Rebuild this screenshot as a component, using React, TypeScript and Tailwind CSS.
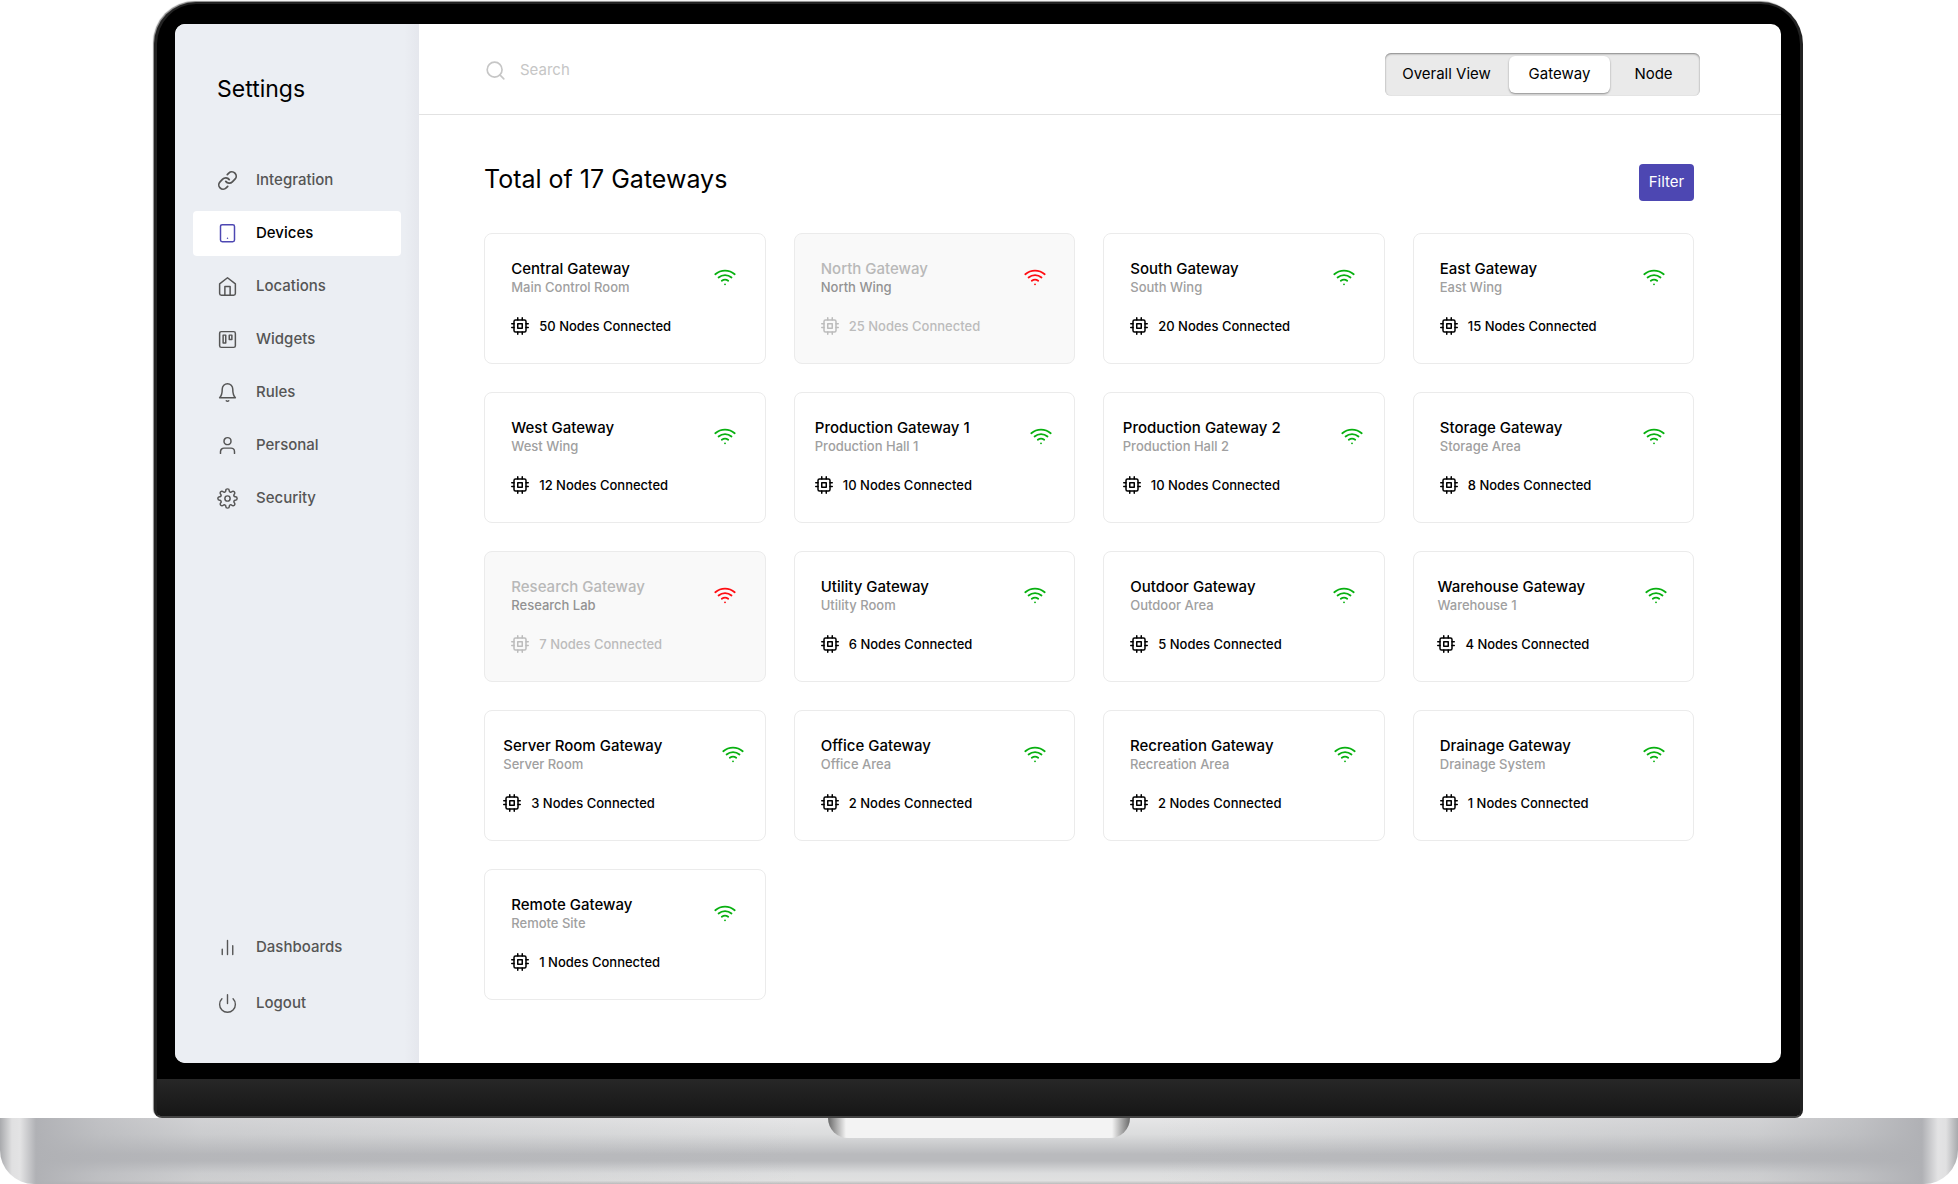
import React from "react";

type IconProps = { className?: string };

function Svg({ className, width = 2, children }: { className?: string; width?: number; children: React.ReactNode }) {
  return (
    <svg viewBox="0 0 24 24" fill="none" stroke="currentColor" strokeWidth={width} strokeLinecap="round" strokeLinejoin="round" aria-hidden="true" className={className}>
      {children}
    </svg>
  );
}

const LinkIcon = ({ className }: IconProps) => (
  <Svg className={className} width={2}>
    <path d="M10 13a5 5 0 0 0 7.54.54l3-3a5 5 0 0 0-7.07-7.07l-1.72 1.71" />
    <path d="M14 11a5 5 0 0 0-7.54-.54l-3 3a5 5 0 0 0 7.07 7.07l1.71-1.71" />
  </Svg>
);
const TabletIcon = ({ className }: IconProps) => (
  <Svg className={className} width={1.7}>
    <rect x="4" y="2" width="16" height="19.5" rx="2" />
    <path d="M12 17.5h.01" />
  </Svg>
);
const HomeIcon = ({ className }: IconProps) => (
  <Svg className={className} width={1.7}>
    <path d="m3 9 9-7 9 7v11a2 2 0 0 1-2 2H5a2 2 0 0 1-2-2z" />
    <path d="M9 22V12h6v10" />
  </Svg>
);
const BoardIcon = ({ className }: IconProps) => (
  <Svg className={className} width={1.7}>
    <rect x="3" y="3" width="18" height="18" rx="2" />
    <path d="M7 7h3v9H7zM14 7h3v5h-3z" />
  </Svg>
);
const BellIcon = ({ className }: IconProps) => (
  <Svg className={className} width={1.7}>
    <path d="M18 8A6 6 0 0 0 6 8c0 7-3 10-3 10h18s-3-3-3-10" />
    <path d="M13.4 21.5a1.9 1.9 0 0 1-2.8 0" />
  </Svg>
);
const UserIcon = ({ className }: IconProps) => (
  <Svg className={className} width={1.7}>
    <path d="M20 21v-2a4 4 0 0 0-4-4H8a4 4 0 0 0-4 4v2" />
    <circle cx="12" cy="7" r="4" />
  </Svg>
);
const GearIcon = ({ className }: IconProps) => (
  <Svg className={className} width={1.7}>
    <circle cx="12" cy="12" r="3" />
    <path d="M19.4 15a1.65 1.65 0 0 0 .33 1.82l.06.06a2 2 0 0 1 0 2.83 2 2 0 0 1-2.83 0l-.06-.06a1.65 1.65 0 0 0-1.82-.33 1.65 1.65 0 0 0-1 1.51V21a2 2 0 0 1-2 2 2 2 0 0 1-2-2v-.09A1.65 1.65 0 0 0 9 19.4a1.65 1.65 0 0 0-1.82.33l-.06.06a2 2 0 0 1-2.83 0 2 2 0 0 1 0-2.83l.06-.06a1.65 1.65 0 0 0 .33-1.82 1.65 1.65 0 0 0-1.51-1H3a2 2 0 0 1-2-2 2 2 0 0 1 2-2h.09A1.65 1.65 0 0 0 4.6 9a1.65 1.65 0 0 0-.33-1.82l-.06-.06a2 2 0 0 1 0-2.83 2 2 0 0 1 2.83 0l.06.06a1.65 1.65 0 0 0 1.82.33H9a1.65 1.65 0 0 0 1-1.51V3a2 2 0 0 1 2-2 2 2 0 0 1 2 2v.09a1.65 1.65 0 0 0 1 1.51 1.65 1.65 0 0 0 1.82-.33l.06-.06a2 2 0 0 1 2.83 0 2 2 0 0 1 0 2.83l-.06.06a1.65 1.65 0 0 0-.33 1.82V9a1.65 1.65 0 0 0 1.51 1H21a2 2 0 0 1 2 2 2 2 0 0 1-2 2h-.09a1.65 1.65 0 0 0-1.51 1z" />
  </Svg>
);
const BarsIcon = ({ className }: IconProps) => (
  <Svg className={className} width={1.6}>
    <path d="M18 20V10M12 20V4M6 20v-6" />
  </Svg>
);
const PowerIcon = ({ className }: IconProps) => (
  <Svg className={className} width={1.6}>
    <path d="M18.36 6.64a9 9 0 1 1-12.73 0M12 2v10" />
  </Svg>
);
const SearchIcon = ({ className }: IconProps) => (
  <Svg className={className} width={1.9}>
    <circle cx="11" cy="11" r="8.5" />
    <path d="m21.5 21.5-4.5-4.5" />
  </Svg>
);
const WifiIcon = ({ className }: IconProps) => (
  <Svg className={className}>
    <path d="M5 12.55a11 11 0 0 1 14.08 0" />
    <path d="M1.42 9a16 16 0 0 1 21.16 0" />
    <path d="M8.53 16.11a6 6 0 0 1 6.95 0" />
    <path d="M12 20h.01" />
  </Svg>
);
const CpuIcon = ({ className }: IconProps) => (
  <Svg className={className}>
    <rect x="4" y="4" width="16" height="16" rx="2" />
    <rect x="9" y="9" width="6" height="6" />
    <path d="M9 1v3M15 1v3M9 20v3M15 20v3M20 9h3M20 14h3M1 9h3M1 14h3" />
  </Svg>
);

const mainNav = [
  { label: "Integration", Icon: LinkIcon },
  { label: "Devices", Icon: TabletIcon, active: true },
  { label: "Locations", Icon: HomeIcon },
  { label: "Widgets", Icon: BoardIcon },
  { label: "Rules", Icon: BellIcon },
  { label: "Personal", Icon: UserIcon },
  { label: "Security", Icon: GearIcon },
];
const footerNav = [
  { label: "Dashboards", Icon: BarsIcon },
  { label: "Logout", Icon: PowerIcon },
];

const gateways = [
  { name: "Central Gateway", place: "Main Control Room", nodes: 50 },
  { name: "North Gateway", place: "North Wing", nodes: 25, offline: true },
  { name: "South Gateway", place: "South Wing", nodes: 20 },
  { name: "East Gateway", place: "East Wing", nodes: 15 },
  { name: "West Gateway", place: "West Wing", nodes: 12 },
  { name: "Production Gateway 1", place: "Production Hall 1", nodes: 10 },
  { name: "Production Gateway 2", place: "Production Hall 2", nodes: 10 },
  { name: "Storage Gateway", place: "Storage Area", nodes: 8 },
  { name: "Research Gateway", place: "Research Lab", nodes: 7, offline: true },
  { name: "Utility Gateway", place: "Utility Room", nodes: 6 },
  { name: "Outdoor Gateway", place: "Outdoor Area", nodes: 5 },
  { name: "Warehouse Gateway", place: "Warehouse 1", nodes: 4 },
  { name: "Server Room Gateway", place: "Server Room", nodes: 3 },
  { name: "Office Gateway", place: "Office Area", nodes: 2 },
  { name: "Recreation Gateway", place: "Recreation Area", nodes: 2 },
  { name: "Drainage Gateway", place: "Drainage System", nodes: 1 },
  { name: "Remote Gateway", place: "Remote Site", nodes: 1 },
];

type NavItem = { label: string; Icon: React.ComponentType<IconProps>; active?: boolean };

function NavLink({ label, Icon, active }: NavItem) {
  return (
    <a
      href="#"
      aria-current={active ? "page" : undefined}
      className={
        "flex h-[45px] items-center gap-[18px] rounded pl-6 text-[15px] font-medium " +
        (active ? "bg-white text-black" : "text-[#555555]")
      }
    >
      <Icon className={"size-[21px] " + (active ? "text-[#4d47b2]" : "")} />
      {label}
    </a>
  );
}

type Gateway = { name: string; place: string; nodes: number; offline?: boolean };

function GatewayCard({ name, place, nodes, offline }: Gateway) {
  return (
    <li className={"flex h-[131px] justify-center rounded-lg border border-[#ebebeb] pt-[25px] " + (offline ? "bg-[#f9f9f9]" : "bg-white")}>
      <div className="flex gap-[60px]">
        <div className="min-w-[143px]">
          <h3 className={"text-[15px] leading-5 font-medium whitespace-nowrap " + (offline ? "text-[#b8b8b8]" : "text-black")}>{name}</h3>
          <p className={"text-[13px] leading-4 font-medium whitespace-nowrap " + (offline ? "text-[#929292]" : "text-[#a0a0a0]")}>{place}</p>
          <p className={"mt-[19px] flex w-0 items-center gap-[10px] text-[13px] leading-6 font-medium whitespace-nowrap " + (offline ? "text-[#bcbcbc]" : "text-black")}>
            <CpuIcon className="size-[18px] shrink-0" />
            {nodes} Nodes Connected
          </p>
        </div>
        <WifiIcon className={"mt-[7px] mr-[2px] size-[22px] shrink-0 " + (offline ? "text-[#ff0d12]" : "text-[#08b010]")} />
      </div>
    </li>
  );
}

export default function App() {
  return (
    <div className="flex min-h-screen flex-col bg-white font-['Inter',sans-serif] text-black">
      <div className="mt-[2px] mr-[155px] ml-[154px] flex flex-1 flex-col overflow-hidden rounded-t-[42px] rounded-b-lg border-x-3 border-t-2 border-b-2 border-[#222222] border-b-[#444444] bg-black pt-5 pr-[19px] pl-[18px] shadow-[-1px_-1px_1px_#8a8a8a]">
        <div className="flex flex-1 overflow-hidden rounded-[10px] bg-white">
          <aside className="flex w-[244px] shrink-0 flex-col bg-[linear-gradient(to_right,#ebeef3_94%,#e5e7ed)] px-[18px] pb-[37px]">
            <h1 className="mt-[50px] pl-6 text-[23px] leading-[30px] font-normal">Settings</h1>
            <nav aria-label="Settings" className="mt-[54px] flex flex-col gap-2">
              {mainNav.map((item) => (
                <NavLink key={item.label} {...item} />
              ))}
            </nav>
            <nav aria-label="Account" className="mt-auto flex flex-col gap-[11px]">
              {footerNav.map((item) => (
                <NavLink key={item.label} {...item} />
              ))}
            </nav>
          </aside>
          <div className="min-w-0 flex-1">
            <header className="flex h-[91px] items-start justify-between border-b border-[#e2e2e2] pr-[81px] pl-[66px]">
              <label className="mt-[34px] flex items-center gap-[14px] text-[#c6c6c6]">
                <SearchIcon className="size-[21px]" />
                <input type="search" aria-label="Search" placeholder="Search" className="w-64 text-[15px] leading-6 text-black outline-none placeholder:text-[#c6c6c6]" />
              </label>
              <div role="group" aria-label="View" className="mt-[29px] flex h-[43px] rounded-md bg-[#eaeaea] p-[3px] text-[15px] shadow-[inset_0_1px_2px_rgba(0,0,0,0.45)]">
                <button type="button" className="w-[121px] pr-1">Overall View</button>
                <button type="button" aria-pressed="true" className="w-[101px] rounded-md bg-white shadow-[0_1px_2px_rgba(0,0,0,0.4)]">Gateway</button>
                <button type="button" className="w-[87px]">Node</button>
              </div>
            </header>
            <main className="pr-[87px] pl-[65px]">
              <div className="flex items-start justify-between pt-[49px]">
                <h2 className="text-[25px] leading-[30px] font-normal">Total of 17 Gateways</h2>
                <button type="button" className="h-[37px] w-[55px] rounded bg-[#4d47b2] text-[15px] text-white">Filter</button>
              </div>
              <ul className="mt-8 grid grid-cols-4 gap-7">
                {gateways.map((g) => (
                  <GatewayCard key={g.name} {...g} />
                ))}
              </ul>
            </main>
          </div>
        </div>
        <div className="mt-4 -mr-[19px] -ml-[18px] h-[37px] bg-linear-to-b from-[#272727] to-[#161616]" />
      </div>
      <div className="flex h-[66px] justify-center rounded-b-[34px] bg-[linear-gradient(to_right,#a9aaad_0px,#e0e0e1_12px,#e3e3e4_20px,#b0b1b5_36px,#b0b1b5b0_100px,#b0b1b560_200px,#b0b1b500_800px,#b0b1b500_calc(100%-800px),#b0b1b560_calc(100%-200px),#b0b1b5b0_calc(100%-100px),#b0b1b5_calc(100%-36px),#e3e3e4_calc(100%-20px),#e0e0e1_calc(100%-12px),#a9aaad),linear-gradient(to_bottom,#e6e6e7,#dbdcdd_25%,#b9babd_55%,#b9babd_65%,#dcddde_84%,#e0e0e0_95%,#bcbcbc)]">
        <div className="h-5 w-[302px] rounded-b-[20px] bg-[linear-gradient(to_right,#6a6a6a,#f3f3f3_18px,#f3f3f3_calc(100%-18px),#6a6a6a)]" />
      </div>
    </div>
  );
}
